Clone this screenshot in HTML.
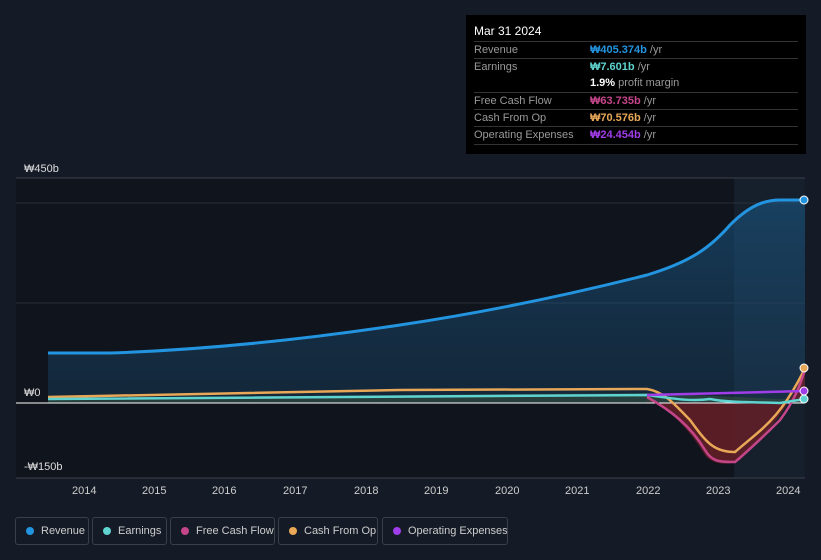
<html><head><style>
body{margin:0;width:821px;height:560px;background:#151b26;font-family:"Liberation Sans",sans-serif;overflow:hidden;position:relative}
.tt{position:absolute;left:466px;top:15px;width:340px;height:139px;background:#000;color:#fff;font-size:11px}
.tt .h{position:absolute;left:8px;top:9px;font-size:12px}
.row{position:absolute;left:8px;width:324px;border-top:1px solid #333;height:17px;line-height:17px;color:#999}
.row span{position:absolute;left:116px}
.lg{position:absolute;top:517px;height:28px;border:1px solid #3a3f4a;border-radius:3px;color:#ccc;font-size:11px;line-height:26px;box-sizing:border-box;white-space:nowrap}
.lg i{position:absolute;left:10px;top:9px;width:8px;height:8px;border-radius:50%}
.lg b{font-weight:normal;position:absolute;left:25px}
.ax{position:absolute;top:485px;color:#ccc;font-size:11px}
</style></head><body>
<svg width="821" height="560" style="position:absolute;left:0;top:0">
<defs><linearGradient id="rg" x1="0" y1="0" x2="0" y2="1"><stop offset="0" stop-color="#1a5a8a" stop-opacity=".55"/><stop offset="1" stop-color="#1a4a70" stop-opacity=".35"/></linearGradient></defs>
<rect x="16" y="178" width="789" height="300" fill="#10141c"/>
<rect x="734" y="178" width="71" height="300" fill="#16202c"/>
<line x1="16" y1="178" x2="805" y2="178" stroke="#3a404a"/>
<line x1="16" y1="203" x2="805" y2="203" stroke="#2a2f38"/>
<line x1="16" y1="303" x2="805" y2="303" stroke="#2a2f38"/>
<line x1="16" y1="478" x2="805" y2="478" stroke="#3a404a"/>
<path d="M48 353 L110 353 C200 350 300 340 400 325 C500 310 580 292 647 275 C690 262 710 248 730 225 C750 205 765 200 780 200 L805 200 L805 403 L48 403Z" fill="url(#rg)"/>
<path d="M647 397 C670 410 690 430 705 455 C712 465 730 466 740 460 C760 440 790 410 805 368 L805 403 L647 403Z" fill="#6a1f28" opacity=".8"/>
<path d="M48 398 L647 393 L805 400 L805 403 L48 403Z" fill="#2f4a3e" opacity=".7"/>
<path d="M48 353 L110 353 C200 350 300 340 400 325 C500 310 580 292 647 275 C690 262 710 248 730 225 C750 205 765 200 780 200 L805 200" fill="none" stroke="#2394df" stroke-width="3"/>
<line x1="16" y1="403" x2="805" y2="403" stroke="#fff" stroke-width="1"/>
<path d="M48 397 L200 394 L400 390 L647 389 C665 392 675 405 690 420 C705 440 712 452 735 452 C760 430 780 420 805 368" fill="none" stroke="#e8a857" stroke-width="2.5"/>
<path d="M647 397 C670 410 690 425 705 450 C712 462 720 462 735 462 C755 445 770 430 780 420 C795 400 800 385 805 370" fill="none" stroke="#c4458a" stroke-width="2.5"/>
<path d="M48 399 L647 395 C670 398 690 402 710 399 C730 403 760 402 780 403 L805 399" fill="none" stroke="#5fd3d0" stroke-width="2.5"/>
<path d="M647 395 L805 391" fill="none" stroke="#a03de8" stroke-width="2.5"/>
<circle cx="804" cy="200" r="4" fill="#2394df" stroke="#fff"/>
<circle cx="804" cy="368" r="4" fill="#e8a857" stroke="#fff"/>
<circle cx="804" cy="391" r="4" fill="#a03de8" stroke="#fff"/>
<circle cx="804" cy="399" r="4" fill="#5fd3d0" stroke="#fff"/>
<text x="24" y="172" fill="#ddd" font-size="11" font-family="Liberation Sans">₩450b</text>
<text x="24" y="396" fill="#ddd" font-size="11" font-family="Liberation Sans">₩0</text>
<text x="24" y="470" fill="#ddd" font-size="11" font-family="Liberation Sans">-₩150b</text>
</svg>
<div class="ax" style="left:72px">2014</div><div class="ax" style="left:142px">2015</div><div class="ax" style="left:212px">2016</div><div class="ax" style="left:283px">2017</div><div class="ax" style="left:354px">2018</div><div class="ax" style="left:424px">2019</div><div class="ax" style="left:495px">2020</div><div class="ax" style="left:565px">2021</div><div class="ax" style="left:636px">2022</div><div class="ax" style="left:706px">2023</div><div class="ax" style="left:776px">2024</div>
<div class="tt"><div class="h">Mar 31 2024</div>
<div class="row" style="top:26px">Revenue<span><i style="font-style:normal;color:#2394df;font-weight:bold">₩405.374b</i> /yr</span></div>
<div class="row" style="top:43px">Earnings<span><i style="font-style:normal;color:#5fd3d0;font-weight:bold">₩7.601b</i> /yr</span></div>
<div class="row" style="top:60px;border:0">&nbsp;<span><i style="font-style:normal;color:#fff;font-weight:bold">1.9%</i> profit margin</span></div>
<div class="row" style="top:77px">Free Cash Flow<span><i style="font-style:normal;color:#c4458a;font-weight:bold">₩63.735b</i> /yr</span></div>
<div class="row" style="top:94px">Cash From Op<span><i style="font-style:normal;color:#e8a857;font-weight:bold">₩70.576b</i> /yr</span></div>
<div class="row" style="top:111px">Operating Expenses<span><i style="font-style:normal;color:#a03de8;font-weight:bold">₩24.454b</i> /yr</span></div>
<div class="row" style="top:129px;height:0"></div>
</div>
<div class="lg" style="left:15px;width:74px"><i style="background:#2394df"></i><b>Revenue</b></div>
<div class="lg" style="left:92px;width:75px"><i style="background:#5fd3d0"></i><b>Earnings</b></div>
<div class="lg" style="left:170px;width:105px"><i style="background:#c4458a"></i><b>Free Cash Flow</b></div>
<div class="lg" style="left:278px;width:100px"><i style="background:#e8a857"></i><b>Cash From Op</b></div>
<div class="lg" style="left:382px;width:126px"><i style="background:#a03de8"></i><b>Operating Expenses</b></div>
</body></html>
